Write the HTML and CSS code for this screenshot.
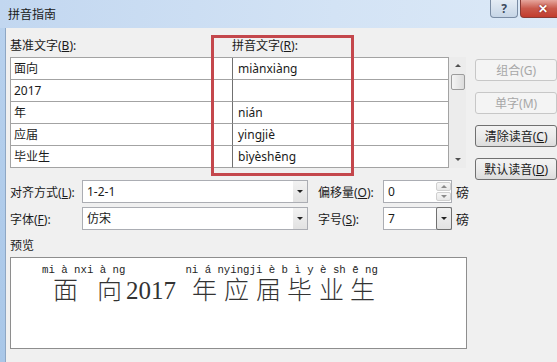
FILE: index.html
```html
<!DOCTYPE html>
<html lang="zh-CN">
<head>
    <meta charset="UTF-8">
    <meta name="viewport" content="width=device-width, initial-scale=1.0">
    <title>拼音指南</title>

    <link rel="stylesheet" href="styles.css">
</head>
<body>

    <div class="window">
        <div class="titlebar">
            <span class="title">拼音指南</span>
            <div class="caption-btns">
                <span class="cap cap-help">?</span>
                <span class="cap cap-close">✕</span>
            </div>
        </div>

        <div class="dialog">
            <div class="col-labels">
                <span class="lbl-base">基准文字(<u>B</u>):</span>
                <span class="lbl-pinyin">拼音文字(<u>R</u>):</span>
            </div>

            <div class="upper">
                <div class="grid">
                    <div class="cell">面向</div>
                    <div class="cell cell-py">miànxiàng</div>
                    <div class="cell">2017</div>
                    <div class="cell cell-py"></div>
                    <div class="cell">年</div>
                    <div class="cell cell-py">nián</div>
                    <div class="cell">应届</div>
                    <div class="cell cell-py">yingjiè</div>
                    <div class="cell">毕业生</div>
                    <div class="cell cell-py">bìyèshēng</div>
                </div>
                <div class="scrollbar">
                    <span class="arrow arrow-up"></span>
                    <span class="thumb"></span>
                    <span class="arrow arrow-down"></span>
                </div>
                <div class="buttons">
                    <div class="btn btn-disabled">组合(G)</div>
                    <div class="btn btn-disabled">单字(M)</div>
                    <div class="btn">清除读音(<u>C</u>)</div>
                    <div class="btn">默认读音(<u>D</u>)</div>
                </div>
            </div>

            <div class="form-row">
                <span class="f-label">对齐方式(<u>L</u>):</span>
                <div class="field field-wide">
                    <span class="field-text">1-2-1</span>
                    <span class="drop"></span>
                </div>
                <span class="f-label f-label-2">偏移量(<u>O</u>):</span>
                <div class="field field-small">
                    <span class="field-text">0</span>
                    <span class="spin">
                        <span class="spin-half"><span class="arrow arrow-up arrow-light"></span></span>
                        <span class="spin-half"><span class="arrow arrow-down arrow-light"></span></span>
                    </span>
                </div>
                <span class="unit">磅</span>
            </div>

            <div class="form-row">
                <span class="f-label">字体(<u>F</u>):</span>
                <div class="field field-wide">
                    <span class="field-text">仿宋</span>
                    <span class="drop"></span>
                </div>
                <span class="f-label f-label-2">字号(<u>S</u>):</span>
                <div class="field field-small">
                    <span class="field-text">7</span>
                    <span class="drop drop-hot"></span>
                </div>
                <span class="unit">磅</span>
            </div>

            <div class="preview-label">预览</div>
            <div class="preview">
                <div class="py-line"><span class="py-1">mi à nxi à ng</span><span class="py-2">ni á nyingji è b ì y è sh ē ng</span></div>
                <div class="base-line">
                    <span>面</span>
                    <span class="m-19">向</span>
                    <span class="latin">2017</span>
                    <span class="m-16">年</span>
                    <span class="m-7">应</span>
                    <span class="m-7">届</span>
                    <span class="m-6">毕</span>
                    <span class="m-7">业</span>
                    <span class="m-6">生</span>
                </div>
            </div>

            <div class="red-mark"></div>
        </div>
    </div>

</body>
</html>
```

FILE: styles.css
```css
* {
    padding: 0;
    margin: 0;
    box-sizing: border-box;
}

html {
    font-size: 12px;
    font-family: "Noto Sans", "Noto Sans CJK SC", sans-serif;
    color: #1b1b1b;
}

body {
    background-color: #f0f0f0;
}

u {
    text-decoration: underline;
    text-underline-offset: 1px;
}

.window {
    width: 557px;
    height: 362px;
    overflow: hidden;

    display: flex;
    flex-direction: column;

    background: linear-gradient(to bottom, #b9d2ee, #a9c7e8);
}

/* title bar */

.titlebar {
    height: 28px;
    flex: none;

    display: flex;
    justify-content: space-between;
    align-items: flex-start;

    background: linear-gradient(to right, #c2d7f0, #d3e3f5 60%, #dce9f7);
}

.title {
    padding: 7px 0 0 8px;
    line-height: 16px;
    color: #1a1a1a;
}

.caption-btns {
    display: flex;
    gap: 2px;
    margin-right: -8px;
}

.cap {
    height: 18px;

    display: flex;
    align-items: center;
    justify-content: center;

    border: 1px solid #7a8ca4;
    border-top: none;
    border-radius: 0 0 4px 4px;
}

.cap-help {
    width: 28px;
    background: linear-gradient(to bottom, #e4ecf5, #c6d5e6);
    color: #3c4a5c;
    font-size: 12px;
    font-weight: bold;
}

.cap-close {
    width: 45px;
    border-color: #8a3a34;
    background: linear-gradient(to bottom, #e6a69d, #c9594b 50%, #c23c2e);
    color: white;
    font-size: 12px;
    font-weight: bold;
    text-shadow: 0 0 2px #600;
}

/* dialog body */

.dialog {
    flex: 1;
    position: relative;

    margin-left: 5px;
    padding-left: 4px;

    background-color: #f0f0f0;
    border-left: 1px solid #8ea7c4;
}

.col-labels {
    display: flex;
    padding-top: 10px;
    line-height: 16px;
}

.lbl-base {
    width: 222px;
}

.upper {
    margin-top: 3px;
    display: flex;
    align-items: flex-start;
}

.grid {
    width: 441px;

    display: grid;
    grid-template-columns: 221px 1fr;

    border: 1px solid #a3a3a3;
    border-bottom: none;
    background-color: white;
}

.cell {
    height: 22px;
    padding-left: 3px;

    line-height: 21px;
    font-size: 12px;

    border-bottom: 1px solid #a3a3a3;
}

.cell-py {
    padding-left: 5px;
    border-left: 1px solid #707070;
}

.scrollbar {
    width: 17px;
    height: 111px;

    display: flex;
    flex-direction: column;
    align-items: center;

    background-color: #ececec;
}

.arrow {
    width: 0;
    height: 0;
    border-left: 3px solid transparent;
    border-right: 3px solid transparent;
}

.arrow-up {
    border-bottom: 3px solid #505050;
}

.arrow-down {
    border-top: 3px solid #505050;
}

.arrow-light.arrow-up {
    border-bottom-color: #8a8a8a;
}

.arrow-light.arrow-down {
    border-top-color: #8a8a8a;
}

.scrollbar .arrow-up {
    margin-top: 7px;
}

.thumb {
    width: 14px;
    height: 16px;
    margin-top: 7px;

    border: 1px solid #9c9c9c;
    border-radius: 2px;
    background: linear-gradient(to right, #f4f4f4, #dcdcdc);
}

.scrollbar .arrow-down {
    margin-top: auto;
    margin-bottom: 7px;
}

.buttons {
    width: 82px;
    margin: 2px 0 0 9px;

    display: flex;
    flex-direction: column;
    gap: 11px;
}

.btn {
    height: 22px;

    display: flex;
    align-items: center;
    justify-content: center;

    border: 1px solid #707070;
    border-radius: 3px;
    background: linear-gradient(to bottom, #f3f3f3, #ebebeb 50%, #dcdcdc);
}

.btn-disabled {
    color: #a7a7a7;
    border-color: #c7c7c7;
    background: #f4f4f4;
}

/* option rows */

.form-row {
    height: 23px;
    margin-bottom: 4px;

    display: flex;
    align-items: center;
}

.f-label {
    width: 72px;
}

.f-label-2 {
    width: 65px;
    margin-left: 10px;
}

.field {
    height: 23px;

    display: flex;
    align-items: stretch;

    background-color: white;
    border: 1px solid #abadb3;
}

.field-wide {
    width: 226px;
}

.field-small {
    width: 69px;
}

.field-text {
    flex: 1;
    padding-left: 4px;
    line-height: 21px;
}

.drop {
    width: 14px;
    display: flex;
    align-items: center;
    justify-content: center;
    background: linear-gradient(to bottom, #f2f2f2, #e2e2e2);
}

.drop::after {
    content: "";
    border-left: 3px solid transparent;
    border-right: 3px solid transparent;
    border-top: 3px solid #222;
}

.drop-hot {
    width: 16px;
    margin: -1px -1px -1px 0;
    border: 1px solid #707070;
    border-radius: 2px;
}

.spin {
    width: 15px;
    display: flex;
    flex-direction: column;
    gap: 1px;
    padding: 1px 0;
}

.spin-half {
    flex: 1;
    display: flex;
    align-items: center;
    justify-content: center;

    border: 1px solid #d0d0d0;
    border-radius: 2px;
    background: linear-gradient(to bottom, #f6f6f6, #e8e8e8);
}

.unit {
    margin-left: 4px;
    font-size: 13px;
}

/* preview */

.preview-label {
    margin-top: 8px;
    line-height: 16px;
}

.preview {
    width: 457px;
    height: 92px;
    margin-top: 3px;
    padding-top: 6px;

    background-color: white;
    border: 1px solid #8e8e8e;
}

.py-line {
    padding-left: 31px;
    white-space: pre;

    font-family: "Liberation Mono", "DejaVu Sans Mono", monospace;
    font-size: 10.7px;
    line-height: 12px;
    color: #1e1e1e;
}

.py-2 {
    margin-left: 60px;
}

.base-line {
    margin-top: 3px;
    padding-left: 42px;

    display: flex;

    font-size: 25px;
    line-height: 24px;
    color: #333;
}

.base-line span {
    font-family: "Liberation Serif", "Noto Sans CJK SC", serif;
    font-weight: 300;
}

.base-line .latin {
    margin-left: 4px;
    font-weight: normal;
}

.m-19 { margin-left: 19px; }
.m-16 { margin-left: 16px; }
.m-7 { margin-left: 7px; }
.m-6 { margin-left: 6px; }

/* annotation frame over the list */

.red-mark {
    position: absolute;
    left: 205px;
    top: 7px;

    width: 143px;
    height: 141px;

    border: 3px solid #c4474c;
}
```
